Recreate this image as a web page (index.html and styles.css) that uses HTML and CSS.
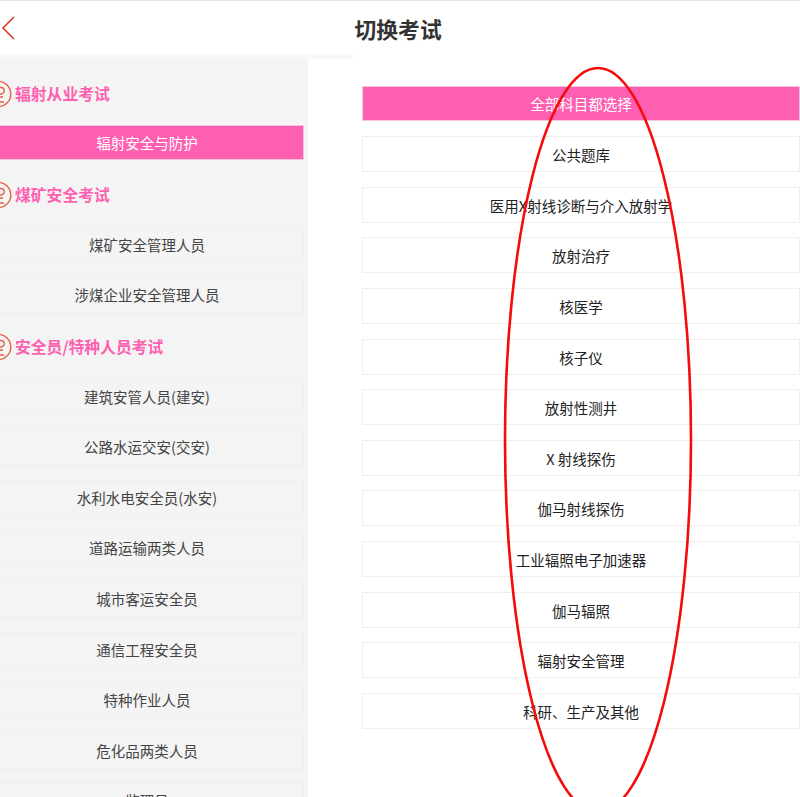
FILE: index.html
```html
<!DOCTYPE html>
<html lang="zh-CN">
<head>
<meta charset="utf-8">
<title>切换考试</title>
<link rel="stylesheet" href="styles.css">
</head>
<body>
<div class="page">
  <div class="left">
    <header class="back-bar">
      <svg class="back" width="14" height="24" viewBox="0 0 14 24"><path d="M13 1 L2 12 L13 23" fill="none" stroke="#e0321e" stroke-width="1.500"/></svg>
    </header>
    <div class="band"></div>
    <nav class="side">
      <h2 class="cat"><svg class="badge" width="28" height="28" viewBox="0 0 28 28"><use href="#seal"/></svg>辐射从业考试</h2>
      <div class="item on">辐射安全与防护</div>
      <h2 class="cat"><svg class="badge" width="28" height="28" viewBox="0 0 28 28"><use href="#seal"/></svg>煤矿安全考试</h2>
      <div class="item">煤矿安全管理人员</div>
      <div class="item">涉煤企业安全管理人员</div>
      <h2 class="cat"><svg class="badge" width="28" height="28" viewBox="0 0 28 28"><use href="#seal"/></svg>安全员/特种人员考试</h2>
      <div class="item">建筑安管人员(建安)</div>
      <div class="item">公路水运交安(交安)</div>
      <div class="item">水利水电安全员(水安)</div>
      <div class="item">道路运输两类人员</div>
      <div class="item">城市客运安全员</div>
      <div class="item">通信工程安全员</div>
      <div class="item">特种作业人员</div>
      <div class="item">危化品两类人员</div>
      <div class="item">监理员</div>
    </nav>
  </div>
  <main class="right">
    <h1 class="title">切换考试</h1>
    <div class="list">
      <div class="item wide on">全部科目都选择</div>
      <div class="item wide">公共题库</div>
      <div class="item wide">医用X射线诊断与介入放射学</div>
      <div class="item wide">放射治疗</div>
      <div class="item wide">核医学</div>
      <div class="item wide">核子仪</div>
      <div class="item wide">放射性测井</div>
      <div class="item wide">X 射线探伤</div>
      <div class="item wide">伽马射线探伤</div>
      <div class="item wide">工业辐照电子加速器</div>
      <div class="item wide">伽马辐照</div>
      <div class="item wide">辐射安全管理</div>
      <div class="item wide">科研、生产及其他</div>
    </div>
  </main>
</div>
<svg class="defs" width="0" height="0"><defs><g id="seal" fill="none" stroke="#e8604c" stroke-width="1.400"><circle cx="14" cy="14" r="12.800"/><path d="M8 7.500h9a3 3 0 0 1 0 6.500H8M8 17h11M13 14v8M7 22h13"/></g></defs></svg>
<svg class="ellipse" width="800" height="797" viewBox="0 0 800 797"><ellipse cx="598" cy="440" rx="93" ry="372" fill="none" stroke="#f60a0a" stroke-width="2.600"/></svg>
</body>
</html>
```
FILE: styles.css
```css
* { box-sizing: border-box; }
html, body { margin: 0; padding: 0; }
body {
  width: 800px;
  height: 797px;
  overflow: hidden;
  position: relative;
  background: #fff;
  font-family: "Noto Sans CJK SC", "Noto Sans", sans-serif;
  color: #444;
}
.page {
  display: flex;
  height: 797px;
  border-top: 1px solid #e2e2e2;
}
.left { width: 353px; flex: none; }
.back-bar { height: 53px; display: flex; align-items: center; }
.back { margin-left: 1px; }
.band { height: 5px; background: #f8f8f8; }
.side {
  width: 308px;
  height: 738px;
  overflow: hidden;
  background: #f4f4f4;
}
.cat {
  display: flex;
  align-items: center;
  height: 36px;
  margin: 0 0 14.600px;
  padding-top: 2px;
  font-size: 15.800px;
  font-weight: 700;
  line-height: 34px;
  color: #ff5fb0;
  white-space: nowrap;
}
.side .cat:first-child { margin-top: 16px; }
.badge { margin-left: -16px; margin-right: 3px; flex: none; }
.item {
  height: 36px;
  margin: 0 4px 14.600px -10px;
  border: 1px solid #efefef;
  font-size: 14.500px;
  line-height: 34px;
  text-align: center;
  white-space: nowrap;
}
.item.on {
  height: 35px;
  margin-top: -0.500px;
  margin-bottom: 16.100px;
  line-height: 33px;
  background: #ff5fb0;
  color: #fff;
  border-color: #f4c4dc;
}
.right { flex: 1; min-width: 0; }
.title {
  margin: 0;
  height: 53px;
  padding-left: 1.500px;
  font-size: 21.800px;
  font-weight: 700;
  line-height: 56px;
  color: #333;
}
.list { padding: 31.700px 0 0 9px; }
.wide { margin: 0 0 14.600px; background: #fff; color: #222; line-height: 35px; }
.wide.on { height: 35px; margin-top: 0.500px; margin-bottom: 15.100px; line-height: 33px; background: #ff5fb0; color: #fff; }
.defs { position: absolute; }
.ellipse { position: absolute; left: 0; top: 0; pointer-events: none; }
```
